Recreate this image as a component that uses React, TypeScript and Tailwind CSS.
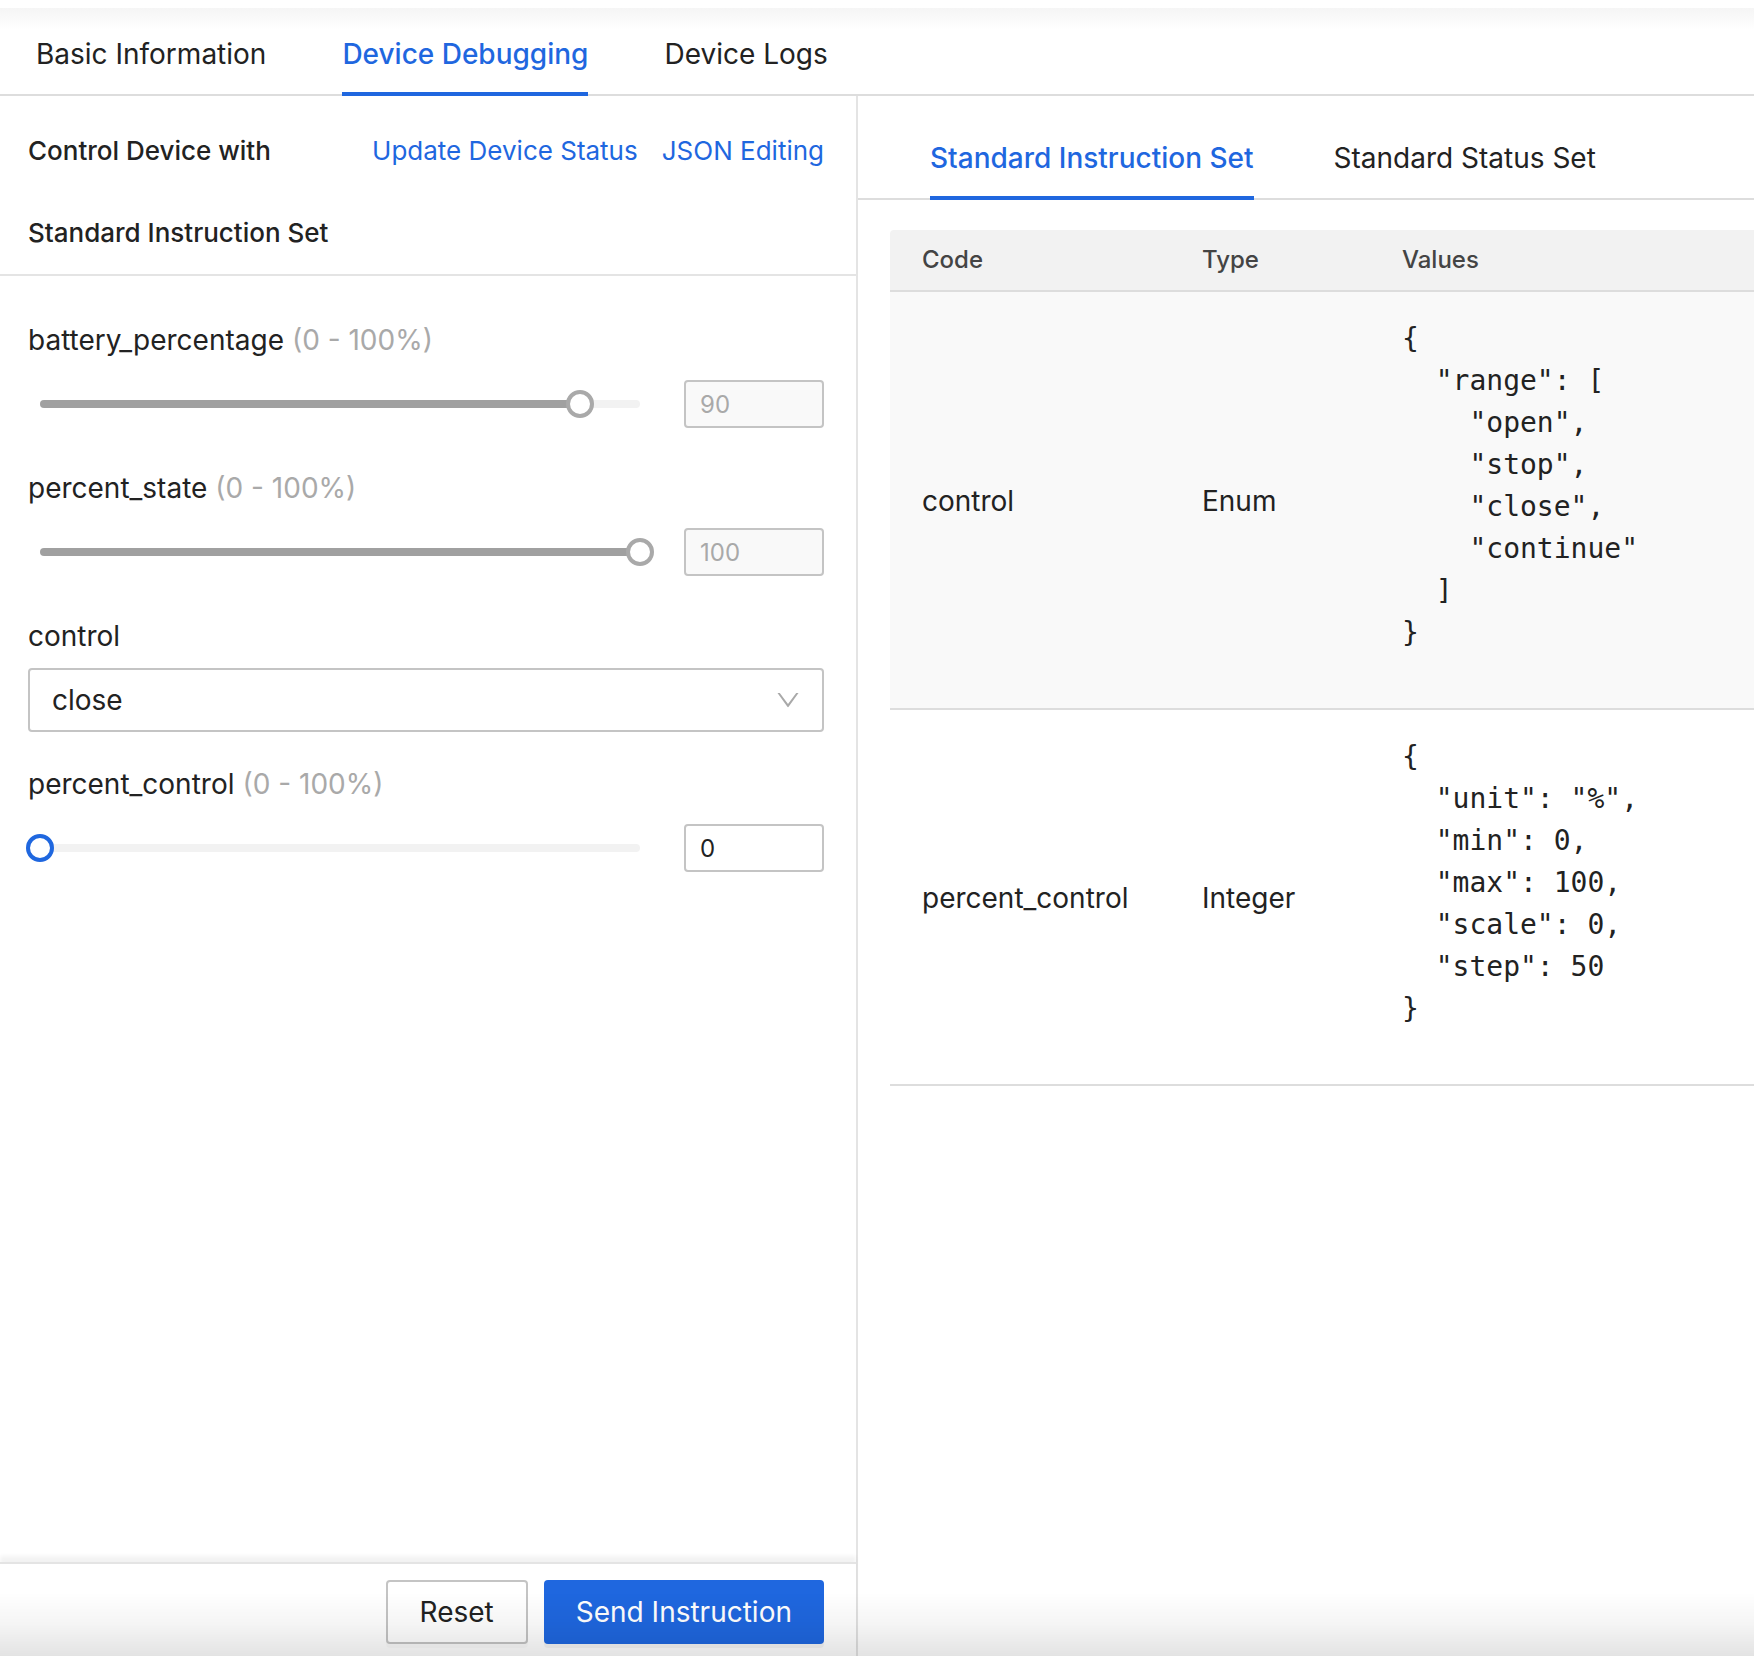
import { useState } from 'react';
import type { ReactNode } from 'react';
import clsx from 'clsx';

const instructions = [
  {
    code: 'control',
    type: 'Enum',
    values: { range: ['open', 'stop', 'close', 'continue'] },
  },
  {
    code: 'percent_control',
    type: 'Integer',
    values: { unit: '%', min: 0, max: 100, scale: 0, step: 50 },
  },
];

function Tabs({ items, initial, className }: { items: string[]; initial: string; className?: string }) {
  const [active, setActive] = useState(initial);

  return (
    <div role="tablist" className={clsx('flex border-b-2 border-[#dddddd]', className)}>
      {items.map((item) => (
        <button
          key={item}
          type="button"
          role="tab"
          aria-selected={item === active}
          onClick={() => setActive(item)}
          className={clsx(
            '-mb-0.5 cursor-pointer whitespace-nowrap border-b-4 text-[28px] leading-[44px]',
            item === active ? 'border-[#1f67df] font-medium text-[#1f67df]' : 'border-transparent hover:text-[#1f67df]',
          )}
        >
          {item}
        </button>
      ))}
    </div>
  );
}

function Field({ id, label, hint, children }: { id: string; label: string; hint?: string; children: ReactNode }) {
  return (
    <div className="mb-5">
      <label htmlFor={id} className="block text-[28px] leading-[64px]">
        {label}
        {hint ? <span className="ml-2 text-[#a9a9a9]">{hint}</span> : null}
      </label>
      {children}
    </div>
  );
}

function PercentField({ code, initial, disabled = false }: { code: string; initial: number; disabled?: boolean }) {
  const [value, setValue] = useState(initial);

  return (
    <Field id={code} label={code} hint="(0 - 100%)">
      <div className="flex h-16 items-center">
        <div className="relative ml-3 mr-11 flex h-7 flex-1 items-center">
          <div className="h-2 w-full overflow-hidden rounded-full bg-[#f2f2f2]">
            <div className={clsx('h-full', disabled ? 'bg-[#a0a0a0]' : 'bg-[#1f67df]')} style={{ width: `${value}%` }} />
          </div>
          <input
            id={code}
            type="range"
            min={0}
            max={100}
            value={value}
            disabled={disabled}
            onChange={(e) => setValue(Number(e.target.value))}
            className="absolute -left-3.5 top-0 h-7 w-[calc(100%+28px)] appearance-none bg-transparent text-[#1f67df] disabled:text-[#a9a9a9] [&::-webkit-slider-thumb]:size-7 [&::-webkit-slider-thumb]:appearance-none [&::-webkit-slider-thumb]:rounded-full [&::-webkit-slider-thumb]:border-4 [&::-webkit-slider-thumb]:border-current [&::-webkit-slider-thumb]:bg-white"
          />
        </div>
        <input
          type="text"
          inputMode="numeric"
          aria-label={`${code} value`}
          value={value}
          disabled={disabled}
          onChange={(e) => setValue(Math.min(100, Number(e.target.value) || 0))}
          className="h-12 w-[140px] rounded-sm border-2 border-[#c4c4c4] bg-white px-3.5 text-[24px] disabled:bg-[#f9f9f9] disabled:text-[#a9a9a9]"
        />
      </div>
    </Field>
  );
}

function ControlPanel() {
  return (
    <section className="flex w-[858px] shrink-0 flex-col border-r-2 border-[#e4e4e4]">
      <header className="flex items-start border-b-2 border-[#e4e4e4] pl-7 pr-8 pt-3.5 text-[26px] leading-[82px]">
        <h2 className="flex-1 font-medium">Control Device with Standard Instruction Set</h2>
        <nav className="flex gap-6 text-[#1f67df]">
          <a href="#status">Update Device Status</a>
          <a href="#json">JSON Editing</a>
        </nav>
      </header>

      <form className="flex flex-1 flex-col" onSubmit={(e) => e.preventDefault()}>
        <div className="flex-1 pl-7 pr-8 pt-8">
          <PercentField code="battery_percentage" initial={90} disabled />
          <PercentField code="percent_state" initial={100} disabled />
          <Field id="control" label="control">
            <div className="relative">
              <select
                id="control"
                defaultValue="close"
                className="block h-16 w-full appearance-none rounded-sm border-2 border-[#c4c4c4] bg-white px-[22px] text-[28px]"
              >
                {instructions[0].values.range?.map((option) => (
                  <option key={option}>{option}</option>
                ))}
              </select>
              <svg viewBox="0 0 24 24" className="pointer-events-none absolute right-6 top-5 size-6 text-[#a9a9a9]" fill="currentColor">
                <path d="M1.5 5h2.3L12 16l8.2-11h2.3L12.8 18.6a1 1 0 0 1-1.6 0z" />
              </svg>
            </div>
          </Field>
          <PercentField code="percent_control" initial={0} />
        </div>

        <footer className="flex justify-end gap-4 border-t-2 border-[#e4e4e4] pb-3 pr-8 pt-4 text-[28px] shadow-[0_-6px_4px_rgba(0,0,0,0.05)]">
          <button type="reset" className="h-16 rounded-sm border-2 border-[#c4c4c4] bg-white px-8 shadow-[0_4px_0_rgba(0,0,0,0.02)]">
            Reset
          </button>
          <button type="submit" className="h-16 rounded-sm bg-[#1f67df] px-8 text-white shadow-[0_4px_0_rgba(0,0,0,0.04)]">
            Send Instruction
          </button>
        </footer>
      </form>
    </section>
  );
}

function InstructionTable() {
  return (
    <table className="w-full table-fixed text-left text-[28px]">
      <thead className="text-[24px] text-[#444444]">
        <tr className="h-[61px] border-b-2 border-[#dddddd]">
          <th className="w-[280px] rounded-tl bg-[#f2f2f2] px-8 font-medium">Code</th>
          <th className="w-[200px] bg-[#f2f2f2] px-8 font-medium">Type</th>
          <th className="bg-[#f2f2f2] px-8 font-medium">Values</th>
        </tr>
      </thead>
      <tbody>
        {instructions.map((row) => (
          <tr key={row.code} className="border-b-2 border-[#dddddd] odd:bg-[#f9f9f9]">
            <td className="px-8 pb-6 pt-[26px]">{row.code}</td>
            <td className="px-8 pb-6 pt-[26px]">{row.type}</td>
            <td className="px-8 pb-6 pt-[26px]">
              <pre className="mb-[30px] font-['DejaVu_Sans_Mono',monospace] leading-[42px]">{JSON.stringify(row.values, null, 2)}</pre>
            </td>
          </tr>
        ))}
      </tbody>
    </table>
  );
}

export default function App() {
  return (
    <div className="flex min-h-screen flex-col bg-white font-['Inter',sans-serif] text-[#222222]">
      <div className="mt-2 bg-linear-to-b from-[#f5f5f5] to-white to-25%">
        <Tabs items={['Basic Information', 'Device Debugging', 'Device Logs']} initial="Device Debugging" className="h-[88px] gap-[76px] px-9 pt-2" />
      </div>

      <main className="flex flex-1">
        <ControlPanel />
        <section className="min-w-0 flex-1">
          <Tabs items={['Standard Instruction Set', 'Standard Status Set']} initial="Standard Instruction Set" className="h-[104px] gap-20 px-[72px] pt-6" />
          <div className="pl-8 pt-[30px]">
            <InstructionTable />
          </div>
        </section>
      </main>

      <div className="pointer-events-none fixed inset-x-0 bottom-0 h-16 bg-linear-to-b from-transparent via-black/4 to-black/11" />
    </div>
  );
}
